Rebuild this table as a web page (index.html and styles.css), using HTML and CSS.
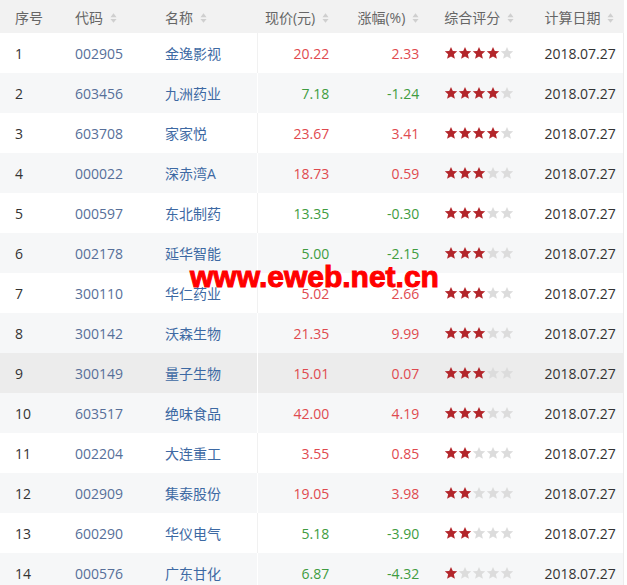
FILE: index.html
```html
<!DOCTYPE html>
<html lang="zh-CN">
<head>
    <meta charset="UTF-8">
    <title>评级列表</title>
    <link rel="stylesheet" href="styles.css">
</head>
<body>
    <svg class="defs" width="0" height="0">
        <symbol id="star" viewBox="0 0 24 24">
            <path d="M12 1.5l3.1 7 7.6.7-5.8 5 1.8 7.5L12 17.8l-6.7 3.9 1.8-7.5-5.8-5 7.6-.7z"/>
        </symbol>
        <symbol id="sort" viewBox="0 0 8 12">
            <path d="M4 0.5L7.5 5H0.5z M4 11.5L0.5 7h7z"/>
        </symbol>
    </svg>

    <div class="board">
        <table class="rank-table">
            <thead>
                <tr>
                    <th class="col-no">序号</th>
                    <th class="col-code">代码<svg class="sort"><use href="#sort"/></svg></th>
                    <th class="col-name">名称<svg class="sort"><use href="#sort"/></svg></th>
                    <th class="col-price num">现价(元)<svg class="sort"><use href="#sort"/></svg></th>
                    <th class="col-change num">涨幅(%)<svg class="sort"><use href="#sort"/></svg></th>
                    <th class="col-score">综合评分<svg class="sort"><use href="#sort"/></svg></th>
                    <th class="col-date">计算日期<svg class="sort"><use href="#sort"/></svg></th>
                </tr>
            </thead>
            <tbody id="rows"></tbody>
        </table>

        <div class="watermark">www.eweb.net.cn</div>
    </div>

    <script>
        const stocks = [
            [1, '002905', '金逸影视', '20.22', '2.33', 4],
            [2, '603456', '九洲药业', '7.18', '-1.24', 4],
            [3, '603708', '家家悦', '23.67', '3.41', 4],
            [4, '000022', '深赤湾A', '18.73', '0.59', 3],
            [5, '000597', '东北制药', '13.35', '-0.30', 3],
            [6, '002178', '延华智能', '5.00', '-2.15', 3],
            [7, '300110', '华仁药业', '5.02', '2.66', 3],
            [8, '300142', '沃森生物', '21.35', '9.99', 3],
            [9, '300149', '量子生物', '15.01', '0.07', 3],
            [10, '603517', '绝味食品', '42.00', '4.19', 3],
            [11, '002204', '大连重工', '3.55', '0.85', 2],
            [12, '002909', '集泰股份', '19.05', '3.98', 2],
            [13, '600290', '华仪电气', '5.18', '-3.90', 2],
            [14, '000576', '广东甘化', '6.87', '-4.32', 1]
        ];

        const tbody = document.getElementById('rows');

        stocks.forEach(([no, code, name, price, change, score]) => {
            const trend = change.startsWith('-') ? 'down' : 'up';
            let stars = '';
            for (let i = 0; i < 5; i++) {
                stars += `<svg class="star ${i < score ? 'on' : ''}"><use href="#star"/></svg>`;
            }
            const tr = document.createElement('tr');
            if (no === 9) tr.className = 'hover';
            tr.innerHTML = `
                <td class="col-no">${no}</td>
                <td class="col-code"><a href="#">${code}</a></td>
                <td class="col-name"><a href="#">${name}</a></td>
                <td class="col-price num ${trend}">${price}</td>
                <td class="col-change num ${trend}">${change}</td>
                <td class="col-score"><span class="stars">${stars}</span></td>
                <td class="col-date">2018.07.27</td>`;
            tbody.appendChild(tr);
        });
    </script>
</body>
</html>
```

FILE: styles.css
```css
body {
    margin: 0;
    background-color: #fff;
    font-family: 'Open Sans', 'Noto Sans CJK SC', sans-serif;
    font-size: 14px;
    color: #333;
}

.defs {
    position: absolute;
}

.board {
    position: relative;
    width: 624px;
}

.rank-table {
    width: 624px;
    border-collapse: collapse;
    table-layout: fixed;
}

.rank-table th {
    height: 33px;
    padding: 0 0 0 15px;
    background-color: #f2f2f2;
    color: #666;
    font-weight: normal;
    text-align: left;
    white-space: nowrap;
}

.rank-table td {
    height: 40px;
    padding: 0 0 0 15px;
    white-space: nowrap;
}

.rank-table tbody tr:nth-child(even) {
    background-color: #f6f7f8;
}

.rank-table tbody tr.hover {
    background-color: #ececec;
}

.rank-table tbody td:last-child {
    border-right: 1px solid #ececec;
}

.rank-table a {
    text-decoration: none;
}

.col-no { width: 45px; }
.col-code { width: 75px; }
.col-name { width: 92px; }
.col-price { width: 82px; }
.col-change { width: 90px; }
.col-score { width: 85px; }
.col-date { width: 79px; }

.rank-table th.col-price,
.rank-table td.col-price {
    width: 72px;
    padding: 0 10px 0 0;
}

.rank-table th.col-change,
.rank-table td.col-change {
    width: 80px;
    padding: 0 10px 0 0;
}

.rank-table .num {
    text-align: right;
}

.rank-table td.col-name {
    border-right: 1px solid #f1f1f1;
}

.rank-table tbody tr:nth-child(even) td.col-name,
.rank-table tbody tr.hover td.col-name {
    border-right-color: #fff;
}

.col-code a {
    color: #576f99;
}

.col-name a {
    color: #3d69a3;
}

.up {
    color: #df4a4f;
}

.down {
    color: #3f9c41;
}

.sort {
    width: 7px;
    height: 12px;
    margin-left: 7px;
    vertical-align: -1px;
    fill: #cfcfcf;
}

.stars {
    display: flex;
    gap: 0;
}

.star {
    width: 14px;
    height: 14px;
    fill: #dcdcdc;
}

.star.on {
    fill: #b3262b;
}

.col-date {
    color: #333;
}

.watermark {
    position: absolute;
    left: 190px;
    top: 260px;
    color: #ff0000;
    font-family: 'Liberation Sans', Arial, sans-serif;
    font-size: 30px;
    font-weight: bold;
    -webkit-text-stroke: 1px #ff0000;
}
```
